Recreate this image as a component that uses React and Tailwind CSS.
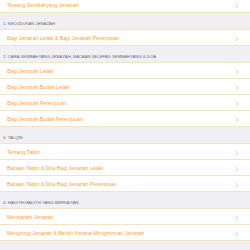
import React from "react";

const sections = [
  { title: null, rows: ["Tentang Sembahyang Jenazah"] },
  { title: "1. KEDUDUKAN JENAZAH", rows: ["Bagi Jenazah Lelaki & Bagi Jenazah Perempuan"] },
  {
    title: "2. CARA SEMBAHYANG JENAZAH, BACAAN SELEPAS SEMBAHYANG & DOA",
    rows: ["Bagi Jenazah Lelaki", "Bagi Jenazah Budak Lelaki", "Bagi Jenazah Perempuan", "Bagi Jenazah Budak Perempuan"],
  },
  {
    title: "3. TALQIN",
    rows: ["Tentang Talqin", "Bacaan Talqin & Doa Bagi Jenazah Lelaki", "Bacaan Talqin & Doa Bagi Jenazah Perempuan"],
  },
  {
    title: "4. HADITH-HADITH YANG  BERKAITAN",
    rows: ["Menziarahi Jenazah", "Mengiringi Jenazah & Berdiri Kerana Menghormati Jenazah"],
  },
  { title: "5. FATWA-FATWA MUFTI", rows: [] },
];

function Chevron() {
  return (
    <svg width="4" height="6" viewBox="0 0 4 6" className="shrink-0">
      <path d="M0.8 0.8 L3 3 L0.8 5.2" fill="none" stroke="#c8c8cc" strokeWidth="0.8" />
    </svg>
  );
}

export default function App() {
  return (
    <div
      className="w-[250px] h-[250px] overflow-hidden bg-white"
      style={{ fontFamily: '"Liberation Sans", Arial, sans-serif' }}
    >
      <div className="-mt-[3px] flex flex-col">
        {sections.map((s, i) => (
          <div key={i} className="flex flex-col">
            {s.title && (
              <div className="h-[17px] bg-[#efeff4] border-b border-[#f4e4c4] flex items-end pl-[3px] pb-[2px] text-[4.25px] text-[#6d6d72] whitespace-nowrap">
                {s.title}
              </div>
            )}
            {s.rows.map((r, j) => (
              <div
                key={j}
                className="h-[16px] bg-white border-b border-[#f4e4c4] flex items-center justify-between pl-[7px] pr-[11px] pt-[2px]"
              >
                <span className="text-[5.2px] text-[#f6a632] whitespace-nowrap">{r}</span>
                <Chevron />
              </div>
            ))}
          </div>
        ))}
      </div>
    </div>
  );
}
